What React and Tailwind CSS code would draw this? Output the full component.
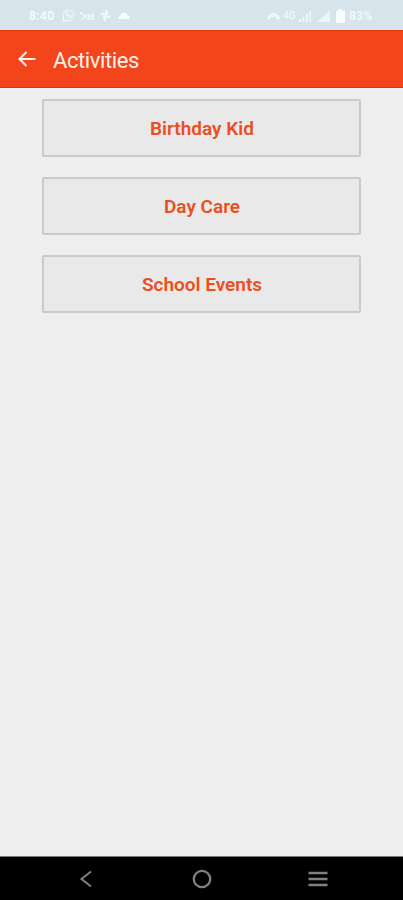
const activities = ["Birthday Kid", "Day Care", "School Events"];

function StatusBar() {
  return (
    <div className="flex h-[30px] shrink-0 items-center justify-between bg-[#d7e4eb] pl-[29px] pr-[30px] pt-[1px] text-[12px] font-medium text-[#f7fcfe]">
      <div className="flex items-center">
        <span className="w-[26px] tracking-[0.5px]">8:40</span>
        <svg className="ml-[7px]" width="13" height="13" viewBox="0 0 13 13" fill="none" stroke="currentColor">
          <path d="M1 12l.8-2.7A5.4 5.4 0 1 1 4 11.3z" />
          <path d="M4.2 3.500c-.4 2.600 2.500 5.200 4.800 5.100l.7-1.200-1.600-.9-.8.6-1.700-1.700.6-.8-.8-1.600z" />
        </svg>
        <svg className="ml-[5px]" width="14" height="12" viewBox="0 0 14 12" fill="none" stroke="currentColor" strokeWidth="1.500" opacity=".75">
          <path d="M1 2l7 7M1 10l7-6M1 2v3M9 9h4V4l-3 3M9 4v5" />
        </svg>
        <svg className="ml-[5px]" width="13" height="13" viewBox="0 0 13 13" fill="currentColor" opacity=".85">
          <path d="M6.200 6.200H1a3.200 3.200 0 0 1 5.200-2zM6.200 6.200V.6a3.200 3.200 0 0 1 2 5.600zM6.800 6.400H12a3.200 3.200 0 0 1-5.200 2.200zM6.800 6.400v6a3.200 3.200 0 0 1-2-5.400z" />
        </svg>
        <svg className="ml-[5px]" width="14" height="9" viewBox="0 0 14 9" fill="currentColor">
          <path d="M1.500 8Q.5 6 3 5 4 1.500 7 1.500T10.500 4.500Q13.500 5.500 12.500 8z" />
        </svg>
      </div>
      <div className="flex items-center">
        <svg width="13" height="10" viewBox="0 0 13 10" fill="currentColor" opacity=".75">
          <path d="M0 8C1 0 12 0 13 8l-3 1-1-3H4L3 9z" />
        </svg>
        <span className="ml-[3px] w-[13px] text-[10px] opacity-85">4G</span>
        <svg className="ml-[3px]" width="13" height="12" viewBox="0 0 13 12" fill="currentColor" opacity=".8">
          <path d="M0 9h2v3H0zM3.500 7h2v5h-2zM7 4h2v8H7zM10.500 1h1.500v11h-1.500z" />
        </svg>
        <svg className="ml-[5px]" width="14" height="12" viewBox="0 0 14 12" fill="currentColor" opacity=".7">
          <path d="M0 12L13 0v12z" />
        </svg>
        <svg className="ml-[5px]" width="9" height="14" viewBox="0 0 9 14" fill="currentColor">
          <path d="M3 0h3v1.500h2a1 1 0 0 1 1 1V13a1 1 0 0 1-1 1H1a1 1 0 0 1-1-1V2.500a1 1 0 0 1 1-1h2z" />
        </svg>
        <span className="ml-[4px] w-[24px] tracking-[0.4px] opacity-90">83%</span>
      </div>
    </div>
  );
}

function AppBar() {
  return (
    <header className="flex h-[58px] shrink-0 items-center border-y border-[#e2360d] bg-[#f2451c] pl-[18px] text-[#fff1ea]">
      <svg width="18" height="16" viewBox="0 0 18 16" fill="none" stroke="currentColor" strokeWidth="2.100">
        <path d="M17.500 8H2M8.500 1L1.500 8l7 7" />
      </svg>
      <h1 className="ml-[17px] pt-[4px] text-[22px] leading-6 tracking-[-0.4px]">Activities</h1>
    </header>
  );
}

function NavBar() {
  return (
    <nav className="flex h-[44px] shrink-0 items-center justify-between border-t border-[#777] bg-black pl-[79px] pr-[75px] text-[#808080]">
      <svg width="14" height="18" viewBox="0 0 14 18" fill="none" stroke="currentColor" strokeWidth="2">
        <path d="M12 1.500L2.500 9l9.500 7.500" />
      </svg>
      <svg className="ml-[3px]" width="20" height="20" viewBox="0 0 20 20" fill="none" stroke="currentColor" strokeWidth="2.300">
        <circle cx="10" cy="10" r="8.200" />
      </svg>
      <svg width="20" height="16" viewBox="0 0 20 16" fill="none" stroke="currentColor" strokeWidth="2.500">
        <path d="M.5 2h19M.5 8h19M.5 14h19" />
      </svg>
    </nav>
  );
}

export default function App() {
  return (
    <div className="flex h-[900px] w-[403px] flex-col overflow-hidden bg-[#eeeeee] font-['Roboto',sans-serif]">
      <StatusBar />
      <AppBar />
      <main className="flex flex-1 flex-col gap-5 px-[42px] pt-[11px]">
        {activities.map((name) => (
          <button
            key={name}
            className="flex h-[58px] w-[319px] items-center justify-center rounded-[2px] border-2 border-[#cacaca] bg-[#e9e9e9] pl-px pt-[2px] text-[19px] font-semibold text-[#ed4e20]"
          >
            {name}
          </button>
        ))}
      </main>
      <NavBar />
    </div>
  );
}
